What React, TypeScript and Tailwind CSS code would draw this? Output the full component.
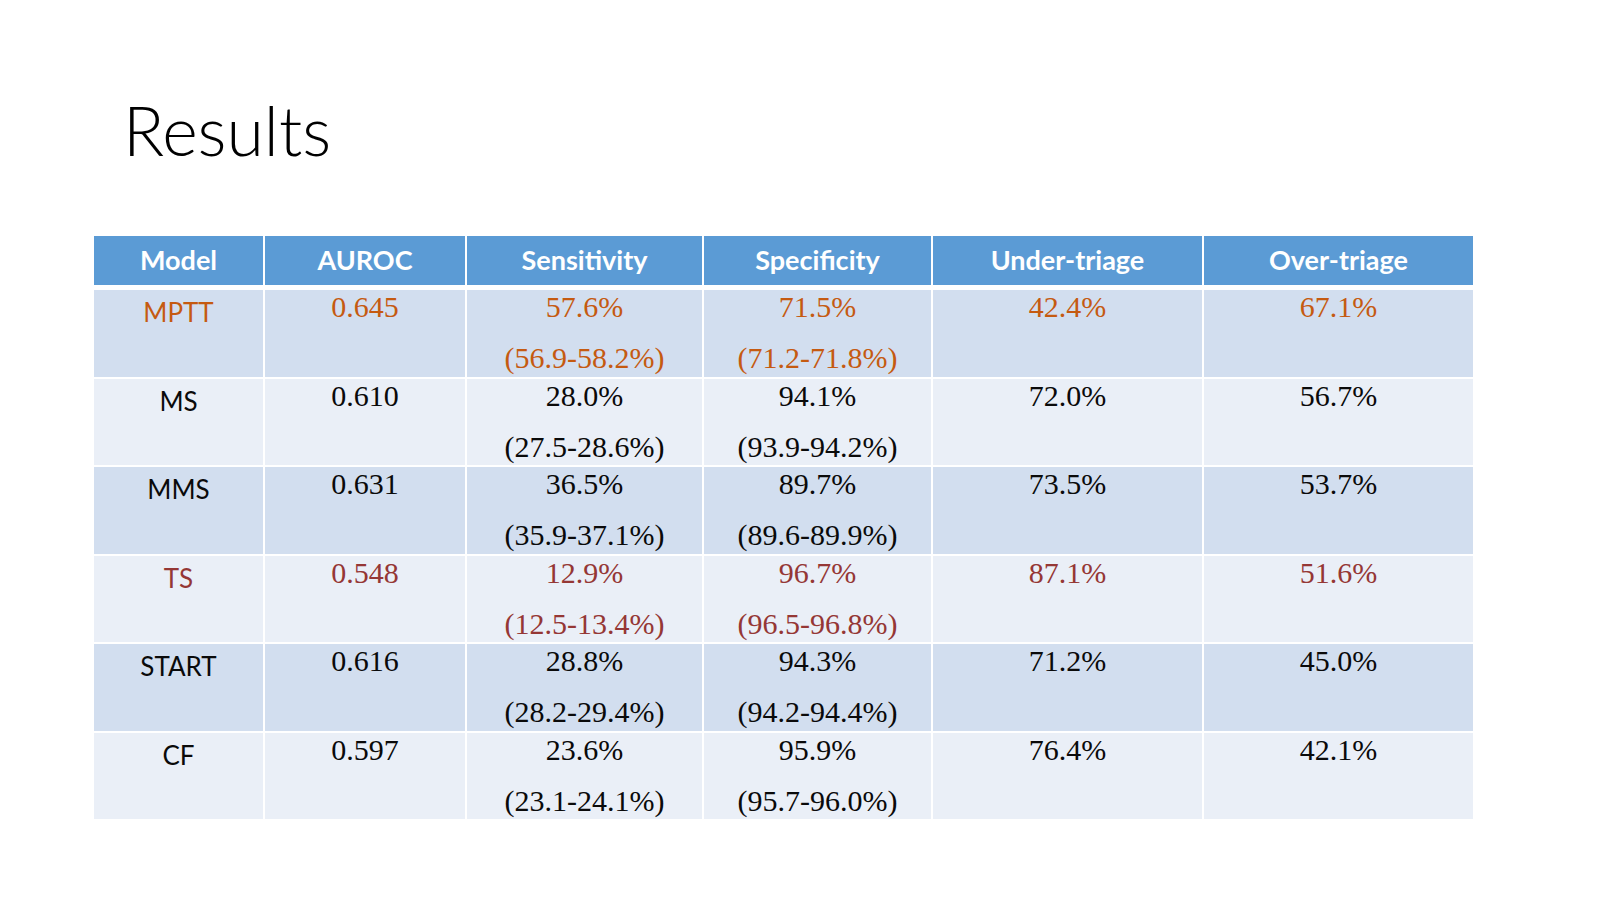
import React from 'react';

type Row = {
  model: string;
  tone: 'orange' | 'red' | 'black';
  auroc: string;
  sens: [string, string];
  spec: [string, string];
  under: string;
  over: string;
};

const rows: Row[] = [
  { model: 'MPTT', tone: 'orange', auroc: '0.645', sens: ['57.6%', '(56.9-58.2%)'], spec: ['71.5%', '(71.2-71.8%)'], under: '42.4%', over: '67.1%' },
  { model: 'MS', tone: 'black', auroc: '0.610', sens: ['28.0%', '(27.5-28.6%)'], spec: ['94.1%', '(93.9-94.2%)'], under: '72.0%', over: '56.7%' },
  { model: 'MMS', tone: 'black', auroc: '0.631', sens: ['36.5%', '(35.9-37.1%)'], spec: ['89.7%', '(89.6-89.9%)'], under: '73.5%', over: '53.7%' },
  { model: 'TS', tone: 'red', auroc: '0.548', sens: ['12.9%', '(12.5-13.4%)'], spec: ['96.7%', '(96.5-96.8%)'], under: '87.1%', over: '51.6%' },
  { model: 'START', tone: 'black', auroc: '0.616', sens: ['28.8%', '(28.2-29.4%)'], spec: ['94.3%', '(94.2-94.4%)'], under: '71.2%', over: '45.0%' },
  { model: 'CF', tone: 'black', auroc: '0.597', sens: ['23.6%', '(23.1-24.1%)'], spec: ['95.9%', '(95.7-96.0%)'], under: '76.4%', over: '42.1%' },
];

const headers = ['Model', 'AUROC', 'Sensitivity', 'Specificity', 'Under-triage', 'Over-triage'];

const toneClass = {
  orange: 'text-[#c55a11]',
  red: 'text-[#953735]',
  black: 'text-[#0a0a0a]',
};

const cols = 'grid grid-cols-[169px_200px_235px_227px_269px_269px] gap-x-[2px]';

const NumCell = ({ lines, bg, tone }: { lines: string[]; bg: string; tone: string }) => (
  <div className={`${bg} ${tone} flex flex-col items-center font-['Liberation_Serif',serif] text-[30px]`}>
    <div className="leading-[34px]">{lines[0]}</div>
    {lines[1] && <div className="leading-[34px] mt-[17px]">{lines[1]}</div>}
  </div>
);

const App: React.FC = () => {
  return (
    <div className="w-full h-[900px] bg-white overflow-hidden pt-[97px]">
      <h1 className="pl-[123px] h-[66px] leading-[66px] text-[68px] font-light text-black font-['Lato','Open_Sans',sans-serif]">
        Results
      </h1>

      <div className="ml-[94px] mt-[73px] w-[1379px]">
        {/* header */}
        <div className={`${cols} h-[49px]`}>
          {headers.map((h) => (
            <div key={h} className="bg-[#5b9bd5] flex items-center justify-center text-white font-bold text-[27px] font-['Lato',sans-serif]">
              {h}
            </div>
          ))}
        </div>

        {/* body */}
        <div className={`${cols} mt-[5px] gap-y-[2px] auto-rows-[86.5px]`}>
          {rows.map((r, i) => {
            const bg = i % 2 === 0 ? 'bg-[#d2deef]' : 'bg-[#eaeff7]';
            const tone = toneClass[r.tone];
            return (
              <React.Fragment key={r.model}>
                <div className={`${bg} ${tone} flex justify-center pt-[5px] text-[26px] leading-[34px] font-['Lato',sans-serif]`}>
                  {r.model}
                </div>
                <NumCell lines={[r.auroc]} bg={bg} tone={tone} />
                <NumCell lines={r.sens} bg={bg} tone={tone} />
                <NumCell lines={r.spec} bg={bg} tone={tone} />
                <NumCell lines={[r.under]} bg={bg} tone={tone} />
                <NumCell lines={[r.over]} bg={bg} tone={tone} />
              </React.Fragment>
            );
          })}
        </div>
      </div>
    </div>
  );
};

export default App;
